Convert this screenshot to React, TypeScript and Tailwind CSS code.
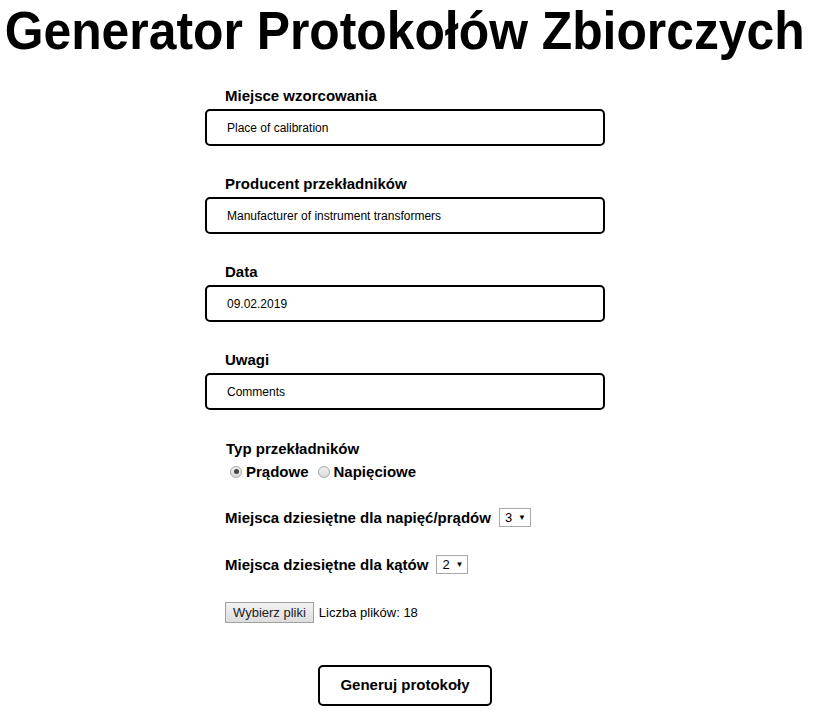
import { useState } from 'react';

const fields = [
  { label: 'Miejsce wzorcowania', value: 'Place of calibration' },
  { label: 'Producent przekładników', value: 'Manufacturer of instrument transformers' },
  { label: 'Data', value: '09.02.2019' },
  { label: 'Uwagi', value: 'Comments' },
];

function Radio({ checked }: { checked: boolean }) {
  return (
    <span className="mr-[4px] inline-flex h-[12px] w-[12px] items-center justify-center rounded-full border border-[#a8a8a8] bg-gradient-to-b from-[#f0f0f0] to-[#dcdcdc]">
      {checked && <span className="h-[5px] w-[5px] rounded-full bg-[#444]" />}
    </span>
  );
}

function SelectBox({ value }: { value: string }) {
  return (
    <span className="ml-[8px] inline-flex h-[19px] w-[32px] items-center justify-between border border-[#a9a9a9] bg-white pl-[5px] pr-[4px] text-[13px] font-normal">
      {value}
      <span className="text-[8px]">▼</span>
    </span>
  );
}

export default function App() {
  const [typ, setTyp] = useState('prad');

  return (
    <div className="min-h-[726px] w-[822px] bg-white font-['Liberation_Sans',Arial,sans-serif] text-black">
      <h1 className="origin-left scale-x-[0.94] whitespace-nowrap pl-[5px] pt-[3px] text-[53px] font-bold leading-[56px]">
        Generator Protokołów Zbiorczych
      </h1>

      <div className="ml-[205px] w-[400px] pt-[28px]">
        {fields.map((f) => (
          <div key={f.label} className="mb-[29px]">
            <div className="pl-[20px] text-[15px] font-bold leading-[17px]">{f.label}</div>
            <div className="mt-[5px] flex h-[37px] items-center rounded-[5px] border-2 border-black pl-[20px] text-[12px]">
              {f.value}
            </div>
          </div>
        ))}

        <div className="pl-[21px] pt-[1px]">
          <div className="text-[15px] font-semibold leading-[17px]">Typ przekładników</div>
          <div className="mt-[6px] flex items-center pl-[4px] text-[15px] font-bold leading-[17px]">
            <label className="flex items-center" onClick={() => setTyp('prad')}>
              <Radio checked={typ === 'prad'} />
              Prądowe
            </label>
            <label className="ml-[9px] flex items-center" onClick={() => setTyp('nap')}>
              <Radio checked={typ === 'nap'} />
              Napięciowe
            </label>
          </div>
        </div>

        <div className="mt-[28px] flex items-center pl-[20px] text-[15px] font-bold leading-[19px]">
          Miejsca dziesiętne dla napięć/prądów
          <SelectBox value="3" />
        </div>

        <div className="mt-[28px] flex items-center pl-[20px] text-[15px] font-bold leading-[19px]">
          Miejsca dziesiętne dla kątów
          <SelectBox value="2" />
        </div>

        <div className="mt-[28px] flex items-center pl-[20px] text-[12px]">
          <span className="inline-flex h-[21px] items-center border border-[#a0a0a0] bg-gradient-to-b from-[#f2f2f2] to-[#dddddd] px-[7px] text-[13px] text-[#222]">
            Wybierz pliki
          </span>
          <span className="ml-[5px] text-[13px]">Liczba plików: 18</span>
        </div>

        <div className="mt-[42px] flex pl-[113px]">
          <button className="h-[41px] w-[174px] rounded-[5px] border-2 border-black bg-white text-[15px] font-bold">
            Generuj protokoły
          </button>
        </div>
      </div>
    </div>
  );
}
